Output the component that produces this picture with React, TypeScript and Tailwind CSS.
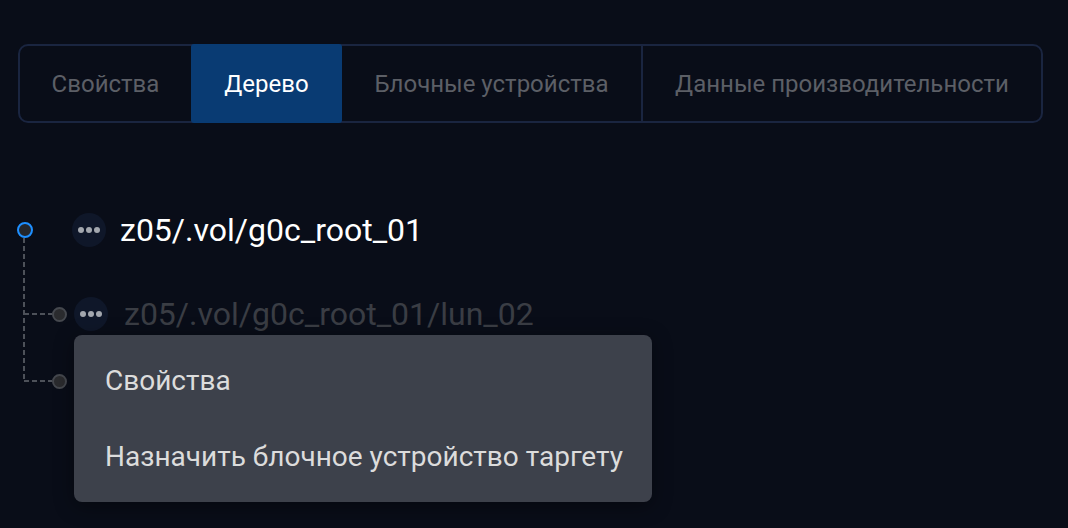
import React from "react";

const tabs = [
  { label: "Свойства", w: "w-[171px]" },
  { label: "Дерево", w: "w-[151px]", active: true },
  { label: "Блочные устройства", w: "w-[301px]", divider: true },
  { label: "Данные производительности", w: "flex-1" },
];

function Dots() {
  return (
    <div className="w-[34px] h-[34px] rounded-full bg-[#0f1729] flex items-center justify-center gap-[2px] shrink-0">
      <span className="w-[6px] h-[6px] rounded-full bg-[#a3a7ae]" />
      <span className="w-[6px] h-[6px] rounded-full bg-[#a3a7ae]" />
      <span className="w-[6px] h-[6px] rounded-full bg-[#a3a7ae]" />
    </div>
  );
}

function GreyDot() {
  return <span className="w-[15px] h-[15px] rounded-full border-2 border-[#45484e] bg-[#2a2b2e] shrink-0" />;
}

export default function App() {
  return (
    <div className="w-[1068px] h-[528px] overflow-hidden bg-[#090d18] font-['Roboto',sans-serif] pt-[44px] pl-[18px] relative">
      <div className="flex w-[1025px] h-[79px] border-2 border-[#1a2540] rounded-[10px]">
        {tabs.map((t) => (
          <div
            key={t.label}
            className={
              "flex items-center justify-center text-[24px] " +
              t.w +
              (t.active
                ? " bg-[#093b73] text-white -my-[2px] rounded-[3px]"
                : " text-[#5c5f66]") +
              (t.divider ? " border-r-2 border-[#1a2540]" : "")
            }
          >
            {t.label}
          </div>
        ))}
      </div>

      <div className="relative mt-[90px] -ml-[18px]">
        <svg className="absolute left-0 top-0" width="70" height="175" viewBox="0 0 70 175">
          <path
            d="M24 25 V168 M24 101 H52 M24 168 H52"
            stroke="#4d5159"
            strokeWidth="2"
            strokeDasharray="5 3"
            fill="none"
          />
        </svg>
        <div className="flex flex-col relative">
          <div className="flex items-center h-[34px]">
            <div className="w-[50px] flex justify-start pl-[17px]">
              <span className="w-[16px] h-[16px] rounded-full border-2 border-[#1e8fff] bg-[#24262b]" />
            </div>
            <div className="ml-[22px]"><Dots /></div>
            <span className="ml-[14px] text-[32px] text-white leading-none">z05/.vol/g0c_root_01</span>
          </div>
          <div className="flex items-center h-[34px] mt-[50px]">
            <div className="w-[67px] flex items-center pl-[52px]">
              <GreyDot />
            </div>
            <div className="ml-[7px]"><Dots /></div>
            <span className="ml-[16px] text-[32px] text-[#3a3d44] leading-none">z05/.vol/g0c_root_01/lun_02</span>
          </div>
          <div className="flex items-center h-[34px] mt-[33px]">
            <div className="w-[67px] flex items-center pl-[52px]">
              <GreyDot />
            </div>
          </div>
        </div>
      </div>

      <div className="absolute left-[74px] top-[335px] w-[578px] h-[167px] rounded-[8px] bg-[#3d414b] shadow-[0_4px_20px_rgba(0,0,0,0.4)] flex flex-col justify-center pl-[31px] gap-[48px] text-[28px] text-[#dcdcdc]">
        <div className="leading-none">Свойства</div>
        <div className="leading-none">Назначить блочное устройство таргету</div>
      </div>
    </div>
  );
}
